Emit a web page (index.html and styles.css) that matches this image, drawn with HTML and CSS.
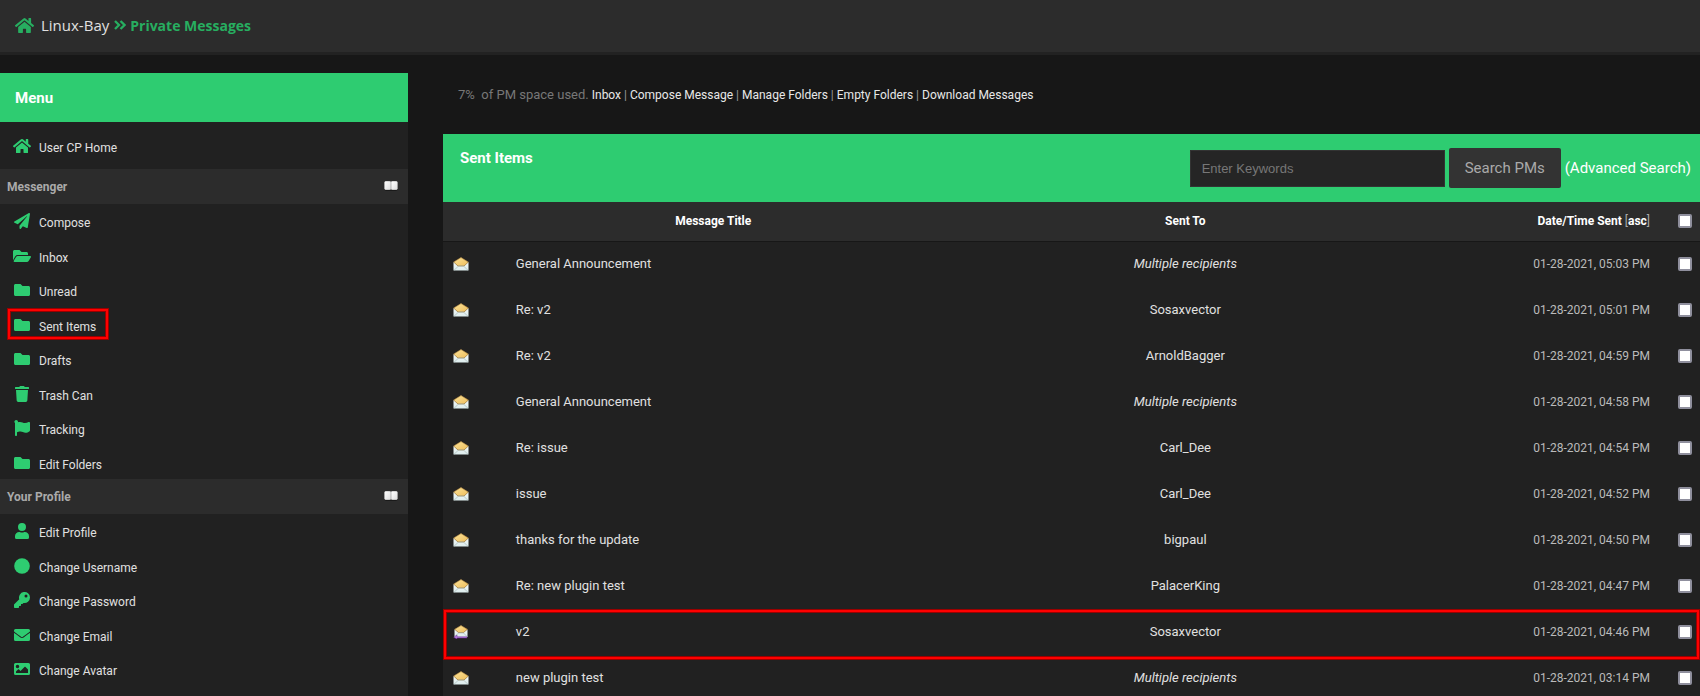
FILE: index.html
```html
<!DOCTYPE html>
<html lang="en">
<head>
<meta charset="utf-8">
<title>Linux-Bay - Private Messages</title>
<link rel="stylesheet" href="styles.css">
</head>
<body>
<svg class="sprite" aria-hidden="true">
  <defs>
    <linearGradient id="flap" x1="0" y1="0" x2="1" y2="1"><stop offset="0" stop-color="#fbe39a"/><stop offset="1" stop-color="#eebd5a"/></linearGradient>
    <linearGradient id="paper" x1="0" y1="0" x2="0" y2="1"><stop offset="0" stop-color="#ffffff"/><stop offset="1" stop-color="#dcecec"/></linearGradient>
    <linearGradient id="knob" x1="0" y1="0" x2="1" y2="1"><stop offset="0" stop-color="#ffffff"/><stop offset="1" stop-color="#dddddd"/></linearGradient>
  </defs>
  <symbol id="home" viewBox="0 0 576 512"><path d="M280.400 148.300L96 300.100V464a16 16 0 0 0 16 16l112.100-.3a16 16 0 0 0 15.900-16V368a16 16 0 0 1 16-16h64a16 16 0 0 1 16 16v95.600a16 16 0 0 0 16 16.100L464 480a16 16 0 0 0 16-16V300L295.700 148.300a12.200 12.200 0 0 0-15.300 0zM571.600 251.500L488 182.600V44.100a12 12 0 0 0-12-12h-56a12 12 0 0 0-12 12v72.600L318.500 43a48 48 0 0 0-61 0L4.300 251.500a12 12 0 0 0-1.600 16.900l25.500 31a12 12 0 0 0 16.900 1.600l235.200-193.700a12.200 12.200 0 0 1 15.300 0L530.900 301a12 12 0 0 0 16.900-1.600l25.500-31a12 12 0 0 0-1.700-16.900z"/></symbol>
  <symbol id="plane" viewBox="0 0 512 512"><path d="M476 3.200L12.500 270.600c-18.100 10.400-15.800 35.600 2.200 43.200L121 358.400l287.300-253.200c5.500-4.900 13.300 2.600 8.600 8.300L176 407v80.500c0 23.600 28.500 32.900 42.500 15.800L282 426l124.600 52.200c14.200 6 30.400-2.900 33-18.200l72-432C515 7.800 493.300-6.800 476 3.200z"/></symbol>
  <symbol id="folder-open" viewBox="0 0 576 512"><path d="M572.700 292.100l-72.400 124.200A64 64 0 0 1 445 448H45c-18.500 0-30.100-20.100-20.700-36.100l72.400-124.200A64 64 0 0 1 152 256h400c18.500 0 30 20.100 20.700 36.100zM152 224h328v-48c0-26.500-21.500-48-48-48H272l-64-64H48C21.500 64 0 85.500 0 112v278l69.100-118.400A96.200 96.200 0 0 1 152 224z"/></symbol>
  <symbol id="folder" viewBox="0 0 512 512"><path d="M464 128H272l-64-64H48C21.500 64 0 85.500 0 112v288c0 26.500 21.500 48 48 48h416c26.500 0 48-21.500 48-48V176c0-26.500-21.500-48-48-48z"/></symbol>
  <symbol id="trash" viewBox="0 0 448 512"><path d="M432 32H312l-9.400-18.700A24 24 0 0 0 281.100 0H166.800a23.700 23.700 0 0 0-21.400 13.300L136 32H16A16 16 0 0 0 0 48v32a16 16 0 0 0 16 16h416a16 16 0 0 0 16-16V48a16 16 0 0 0-16-16zM53.200 467a48 48 0 0 0 47.900 45h245.800a48 48 0 0 0 47.900-45L416 128H32z"/></symbol>
  <symbol id="flag" viewBox="0 0 512 512"><path d="M349.600 98.800c-52 0-95-34.800-160.300-34.800-24.200 0-45.900 4.200-66.100 11.800A56 56 0 1 0 32 98.900V488a24 24 0 0 0 24 24h16a24 24 0 0 0 24-24v-94.400c28.300-12.100 63.600-22.100 114.400-22.100 52 0 95 34.800 160.200 34.800 46.700 0 84-15.800 118.700-39.900A48 48 0 0 0 512 327V96c0-23.400-24.200-38.700-45.400-28.900-34.300 15.900-76.400 31.700-117 31.700z"/></symbol>
  <symbol id="user" viewBox="0 0 448 512"><path d="M224 256a128 128 0 1 0 0-256 128 128 0 1 0 0 256zm89.600 32h-16.700a174 174 0 0 1-145.800 0h-16.700A134.400 134.400 0 0 0 0 422.400V464a48 48 0 0 0 48 48h352a48 48 0 0 0 48-48v-41.600A134.400 134.400 0 0 0 313.600 288z"/></symbol>
  <symbol id="circle" viewBox="0 0 512 512"><circle cx="256" cy="256" r="250"/></symbol>
  <symbol id="key" viewBox="0 0 512 512"><path d="M512 176a176 176 0 0 1-208.900 173l-24 27a24 24 0 0 1-17.900 8H224v40a24 24 0 0 1-24 24h-40v40a24 24 0 0 1-24 24H24a24 24 0 0 1-24-24v-78.100a24 24 0 0 1 7-17l161.800-161.800A176 176 0 1 1 512 176zM336 128a48 48 0 1 0 96 0 48 48 0 1 0-96 0z"/></symbol>
  <symbol id="envelope" viewBox="0 0 512 512"><path d="M502.300 190.800c3.900-3.100 9.700-.2 9.700 4.700V400a48 48 0 0 1-48 48H48a48 48 0 0 1-48-48V195.600c0-5 5.700-7.800 9.700-4.700 22.400 17.400 52.100 39.500 154.100 113.600 21.100 15.400 56.700 47.800 92.200 47.600 35.700.3 72-32.800 92.300-47.600 102-74.100 131.600-96.300 154-113.700zM256 320c23.200.4 56.600-29.200 73.400-41.400 132.700-96.300 142.800-104.700 173.400-128.700a24 24 0 0 0 9.200-18.900v-19a48 48 0 0 0-48-48H48a48 48 0 0 0-48 48v19a24 24 0 0 0 9.200 18.900c30.600 23.900 40.700 32.400 173.400 128.700 16.800 12.200 50.200 41.800 73.400 41.400z"/></symbol>
  <symbol id="image" viewBox="0 0 512 512"><path fill-rule="evenodd" d="M464 448H48a48 48 0 0 1-48-48V112a48 48 0 0 1 48-48h416a48 48 0 0 1 48 48v288a48 48 0 0 1-48 48zM112 120a56 56 0 1 0 0 112 56 56 0 1 0 0-112zM64 384h384V272l-87.500-87.500a12 12 0 0 0-17 0L208 320l-55.500-55.500a12 12 0 0 0-17 0L64 336z"/></symbol>
  <symbol id="signature" viewBox="0 0 512 512"><path d="M0 40h330v70H190v402h-90V110H0zM380 40h50v472h-50z"/></symbol>
  <symbol id="chevrons" viewBox="0 0 12 10"><path d="M1 1l4 4-4 4M6.500 1l4 4-4 4" fill="none" stroke="currentColor" stroke-width="2.300"/></symbol>
  <symbol id="mail" viewBox="0 0 16 14"><path d="M.5 5.200L8 .5l7.500 4.700V13.500H.5z" fill="url(#paper)"/><path d="M.6 5L8 .5 15.400 5 11 9H5z" fill="url(#flap)" stroke="#8a5f1c" stroke-width=".6"/><path d="M1 13.300L5.500 9h5l4.500 4.300" fill="none" stroke="#a9bcbc" stroke-width=".7"/></symbol>
  <symbol id="mail-replied" viewBox="0 0 16 14"><path d="M1.500 4.500L8 .5l6.500 4V12h-13z" fill="url(#paper)"/><path d="M1.600 4.300L8 .5l6.400 3.800L10.500 7.500h-5z" fill="url(#flap)" stroke="#8a5f1c" stroke-width=".6"/><path d="M2 11.500L5.500 8h5l3.500 3.500" fill="none" stroke="#a9bcbc" stroke-width=".7"/><path d="M14 11.800H4V10L.7 12.300 4 14v-1h10z" fill="#b57fdc" stroke="#6e2a9a" stroke-width=".5"/></symbol>
  <symbol id="toggle" viewBox="0 0 14 10"><rect x=".2" y=".8" width="13.600" height="9" rx="2" fill="#151515"/><rect x=".5" y=".2" width="13" height="8.600" rx="1.500" fill="#888"/><rect x=".5" y=".2" width="6.200" height="8.600" rx="1.300" fill="url(#knob)"/><rect x="7.300" y=".2" width="6.200" height="8.600" rx="1.300" fill="url(#knob)"/></symbol>
</svg>

<header class="topbar">
  <nav class="crumbs" aria-label="Breadcrumb">
    <svg class="crumb-home"><use href="#home"/></svg>
    <a href="#">Linux-Bay</a>
    <svg class="crumb-sep"><use href="#chevrons"/></svg>
    <span class="current">Private Messages</span>
  </nav>
</header>

<div class="layout">
  <aside class="sidebar">
    <h2 class="panel-title">Menu</h2>
    <a class="item item-home" href="#"><svg><use href="#home"/></svg>User CP Home</a>
    <h3 class="group">Messenger<button type="button" aria-label="Collapse Messenger"><svg><use href="#toggle"/></svg></button></h3>
    <nav class="items messenger">
      <a class="item" href="#"><svg><use href="#plane"/></svg>Compose</a>
      <a class="item" href="#"><svg><use href="#folder-open"/></svg>Inbox</a>
      <a class="item" href="#"><svg><use href="#folder"/></svg>Unread</a>
      <a class="item marked" href="#"><svg><use href="#folder"/></svg>Sent Items</a>
      <a class="item" href="#"><svg><use href="#folder"/></svg>Drafts</a>
      <a class="item" href="#"><svg><use href="#trash"/></svg>Trash Can</a>
      <a class="item" href="#"><svg><use href="#flag"/></svg>Tracking</a>
      <a class="item" href="#"><svg><use href="#folder"/></svg>Edit Folders</a>
    </nav>
    <h3 class="group">Your Profile<button type="button" aria-label="Collapse Your Profile"><svg><use href="#toggle"/></svg></button></h3>
    <nav class="items profile">
      <a class="item" href="#"><svg><use href="#user"/></svg>Edit Profile</a>
      <a class="item" href="#"><svg><use href="#circle"/></svg>Change Username</a>
      <a class="item" href="#"><svg><use href="#key"/></svg>Change Password</a>
      <a class="item" href="#"><svg><use href="#envelope"/></svg>Change Email</a>
      <a class="item" href="#"><svg><use href="#image"/></svg>Change Avatar</a>
      <a class="item" href="#" aria-label="Change Signature"><svg><use href="#signature"/></svg></a>
    </nav>
  </aside>

  <main class="content">
    <p class="usage"><span class="used">7%&nbsp; of PM space used.</span> <a href="#">Inbox</a> | <a href="#">Compose Message</a> | <a href="#">Manage Folders</a> | <a href="#">Empty Folders</a> | <a href="#">Download Messages</a></p>
    <section class="panel">
      <div class="panel-head">
        <h1>Sent Items</h1>
        <form class="search">
          <input type="text" placeholder="Enter Keywords" aria-label="Enter Keywords">
          <button type="button">Search PMs</button>
          <a href="#">(Advanced Search)</a>
        </form>
      </div>
      <table>
        <colgroup><col class="c-icon"><col class="c-title"><col><col class="c-date"><col class="c-check"></colgroup>
        <thead>
          <tr><th></th><th>Message Title</th><th>Sent To</th><th class="date">Date/Time Sent <span class="sort">[<a href="#">asc</a>]</span></th><th class="check"><input type="checkbox" aria-label="Select all"></th></tr>
        </thead>
        <tbody>
          <tr><td><svg class="mail"><use href="#mail"/></svg></td><td><a href="#">General Announcement</a></td><td class="to"><em>Multiple recipients</em></td><td class="date">01-28-2021, 05:03 PM</td><td class="check"><input type="checkbox" aria-label="Select message"></td></tr>
          <tr><td><svg class="mail"><use href="#mail"/></svg></td><td><a href="#">Re: v2</a></td><td class="to"><a href="#">Sosaxvector</a></td><td class="date">01-28-2021, 05:01 PM</td><td class="check"><input type="checkbox" aria-label="Select message"></td></tr>
          <tr><td><svg class="mail"><use href="#mail"/></svg></td><td><a href="#">Re: v2</a></td><td class="to"><a href="#">ArnoldBagger</a></td><td class="date">01-28-2021, 04:59 PM</td><td class="check"><input type="checkbox" aria-label="Select message"></td></tr>
          <tr><td><svg class="mail"><use href="#mail"/></svg></td><td><a href="#">General Announcement</a></td><td class="to"><em>Multiple recipients</em></td><td class="date">01-28-2021, 04:58 PM</td><td class="check"><input type="checkbox" aria-label="Select message"></td></tr>
          <tr><td><svg class="mail"><use href="#mail"/></svg></td><td><a href="#">Re: issue</a></td><td class="to"><a href="#">Carl_Dee</a></td><td class="date">01-28-2021, 04:54 PM</td><td class="check"><input type="checkbox" aria-label="Select message"></td></tr>
          <tr><td><svg class="mail"><use href="#mail"/></svg></td><td><a href="#">issue</a></td><td class="to"><a href="#">Carl_Dee</a></td><td class="date">01-28-2021, 04:52 PM</td><td class="check"><input type="checkbox" aria-label="Select message"></td></tr>
          <tr><td><svg class="mail"><use href="#mail"/></svg></td><td><a href="#">thanks for the update</a></td><td class="to"><a href="#">bigpaul</a></td><td class="date">01-28-2021, 04:50 PM</td><td class="check"><input type="checkbox" aria-label="Select message"></td></tr>
          <tr><td><svg class="mail"><use href="#mail"/></svg></td><td><a href="#">Re: new plugin test</a></td><td class="to"><a href="#">PalacerKing</a></td><td class="date">01-28-2021, 04:47 PM</td><td class="check"><input type="checkbox" aria-label="Select message"></td></tr>
          <tr class="marked-row"><td><svg class="mail"><use href="#mail-replied"/></svg></td><td><a href="#">v2</a></td><td class="to"><a href="#">Sosaxvector</a></td><td class="date">01-28-2021, 04:46 PM</td><td class="check"><input type="checkbox" aria-label="Select message"></td></tr>
          <tr><td><svg class="mail"><use href="#mail"/></svg></td><td><a href="#">new plugin test</a></td><td class="to"><em>Multiple recipients</em></td><td class="date">01-28-2021, 03:14 PM</td><td class="check"><input type="checkbox" aria-label="Select message"></td></tr>
        </tbody>
      </table>
    </section>
  </main>
</div>
</body>
</html>
```
FILE: styles.css
```css
*, *::before, *::after { box-sizing: border-box; }
body {
  margin: 0;
  height: 100vh;
  overflow: hidden;
  background: #171717;
  color: #999;
  font: 12px/16px Roboto, "Liberation Sans", sans-serif;
}
a { color: #e0e0e0; text-decoration: none; }
h1, h2, h3, p { margin: 0; }
svg { fill: currentColor; flex: none; }
.sprite { position: absolute; width: 0; height: 0; }

.topbar {
  padding: 13px 15px 15px;
  background: #2c2c2c;
  border-bottom: 3px solid #222;
}
.crumbs {
  display: flex;
  align-items: baseline;
  height: 24px;
  color: #27ae60;
  font: 15px/24px "Open Sans", sans-serif;
}
.crumbs svg { align-self: center; }
.crumb-home { width: 19px; height: 17px; margin-right: 7px; }
.crumb-sep { width: 12px; height: 10px; margin: 0 4px 0 5px; }
.current { font-size: 14px; font-weight: 700; }

.layout {
  display: grid;
  grid-template-columns: 24fr 76fr;
  align-items: start;
}
.sidebar { margin-top: 18px; background: #212121; }
.panel-title {
  padding: 17px 15px 15px;
  background: #2ecc71;
  color: #fff;
  font-size: 15px;
  line-height: 17px;
}
.item {
  display: flex;
  align-items: center;
  gap: 8px;
  padding-left: 13px;
}
.item svg { width: 18px; height: 16px; color: #2ecc71; margin-bottom: 4px; }
.item-home { height: 47px; padding-top: 4px; }
.group {
  display: flex;
  align-items: center;
  justify-content: space-between;
  height: 35px;
  padding: 0 10px 0 7px;
  background: #2c2c2c;
  color: #aaa;
  font-size: 12px;
}
.group button { padding: 0 0 1px; border: 0; background: none; line-height: 0; }
.group svg { width: 14px; height: 10px; }
.items { display: grid; grid-auto-rows: 1fr; padding-top: 2px; margin-bottom: -3px; }
.messenger { min-height: 278px; }
.profile { min-height: 209px; }
.marked { position: relative; }
.marked::after {
  content: "";
  position: absolute;
  left: 8px;
  top: -1px;
  width: 100px;
  height: 30px;
  border: 2px solid #f00;
  box-shadow: 0 0 0 1px #900, inset 0 0 0 1px #900;
}

.content { padding: 32px 0 0 35px; }
.usage { padding: 0 15px; }
.usage a { color: #e8e8e8; }
.used { color: #777; font-size: 13px; }
.panel { margin-top: 31px; background: #212121; }
.panel-head {
  display: flex;
  justify-content: space-between;
  padding: 14px 9px 14px 17px;
  background: #2ecc71;
  color: #fff;
}
.panel-head h1 { font-size: 15px; line-height: 20px; }
.search { display: flex; align-items: center; gap: 4px; font-size: 15px; }
.search input {
  width: 255px;
  height: 37px;
  padding: 0 11px;
  border: 1px solid #333;
  background: #252525;
  color: #ccc;
  font: 13px "Liberation Sans", sans-serif;
}
.search input::placeholder { color: #777; }
.search button {
  height: 40px;
  padding: 0 16px;
  border: 0;
  border-radius: 2px;
  background: #333;
  color: #aaa;
  font: 15px Roboto, sans-serif;
}
.search a { color: #fff; }

table { width: 100%; table-layout: fixed; border-collapse: collapse; font-size: 13px; }
.c-icon { width: 5%; }
.c-title { width: 33%; }
.c-date { width: 210px; }
.c-check { width: 40px; }
th {
  height: 39px;
  padding: 0 10px;
  background: #2c2c2c;
  border-bottom: 1px solid #171717;
  color: #fff;
  font-size: 12px;
}
.sort { color: #aaa; font-weight: 400; }
.sort a { color: #fff; font-weight: 700; }
td { height: 46px; padding: 0 10px; }
.to { text-align: center; color: #e0e0e0; }
.date { text-align: right; font-size: 12px; }
td.date { color: #bbb; }
.check { padding: 0 8px 0 18px; line-height: 0; }
.check input {
  appearance: none;
  display: block;
  width: 14px;
  height: 14px;
  margin: 0;
  border: 2px solid #8f8f9d;
  border-radius: 2px;
  background: #fff;
}
.mail { display: block; width: 16px; height: 14px; }
.marked-row { position: relative; }
.marked-row td:first-child::after {
  content: "";
  position: absolute;
  inset: 1px 1px -4px 1px;
  border: 2px solid #f00;
  box-shadow: 0 0 0 1px #900, inset 0 0 0 1px #900;
  pointer-events: none;
}
```
